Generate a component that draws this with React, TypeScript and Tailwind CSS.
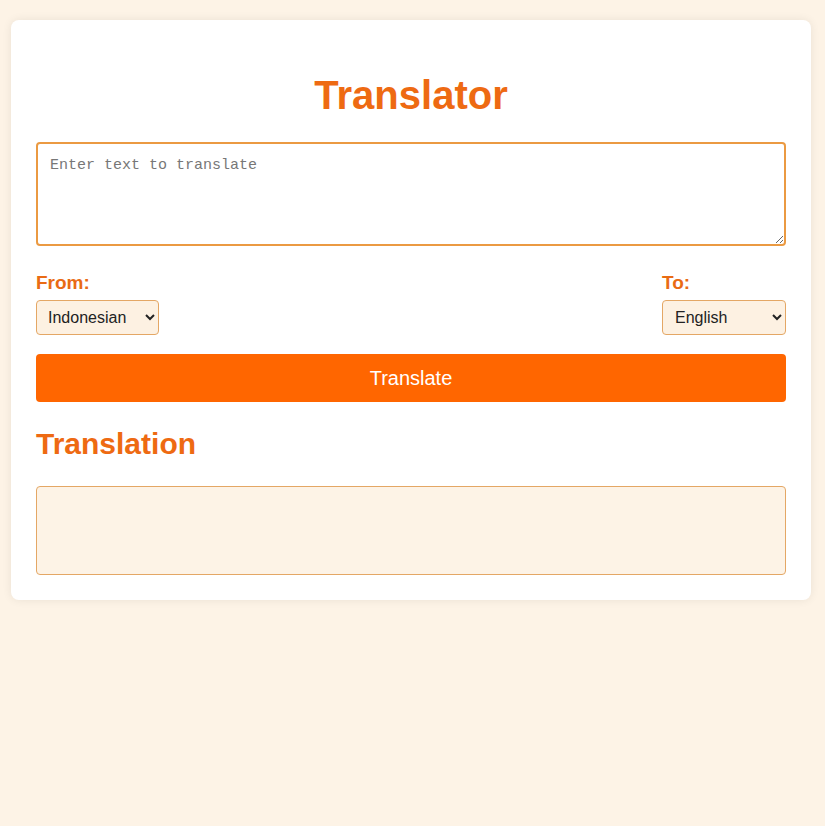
import React, { useState } from 'react'

const App = () => {
	const [text, setText] = useState('')
	const [from, setFrom] = useState('id')
	const [to, setTo] = useState('en')
	const [result, setResult] = useState('')

	return (
		<div className="min-h-[826px] bg-[#fdf3e6] pt-5 font-['Liberation_Sans',Arial,sans-serif]">
			<div className="ml-[11px] w-[800px] rounded-lg bg-white px-[25px] pb-[25px] pt-[25px] shadow-[0_0_10px_rgba(0,0,0,0.08)]">
				<h1 className="mb-[24px] mt-[27px] text-center text-[40px] font-bold leading-[46px] text-[#ee6a12]">Translator</h1>
				<textarea
					value={text}
					onChange={e => setText(e.target.value)}
					placeholder="Enter text to translate"
					className="block h-[104px] w-full rounded border-2 border-[#eb9a42] bg-white px-3 pb-[10px] pt-[13px] font-['Liberation_Mono',monospace] text-[15px] leading-[18px] text-[#333] placeholder:text-[#777] focus:outline-none"
				/>
				<div className="mt-[26px] flex justify-between">
					<div className="flex flex-col">
						<label className="mb-[6px] text-[19px] font-bold leading-[22px] text-[#e96b14]">From:</label>
						<select
							value={from}
							onChange={e => setFrom(e.target.value)}
							className="h-[35px] w-[123px] rounded border border-[#e4a765] bg-[#fdf1e2] pl-[7px] text-[16px] text-[#222]"
						>
							<option value="id">Indonesian</option>
							<option value="en">English</option>
						</select>
					</div>
					<div className="flex flex-col">
						<label className="mb-[6px] text-[19px] font-bold leading-[22px] text-[#e96b14]">To:</label>
						<select
							value={to}
							onChange={e => setTo(e.target.value)}
							className="h-[35px] w-[124px] rounded border border-[#e4a765] bg-[#fdf1e2] pl-[8px] text-[16px] text-[#222]"
						>
							<option value="en">English</option>
							<option value="id">Indonesian</option>
						</select>
					</div>
				</div>
				<button
					onClick={() => setResult(text)}
					className="mt-[19px] block h-[48px] w-full rounded bg-[#ff6600] text-[20px] text-white"
				>
					Translate
				</button>
				<h2 className="mt-[25px] text-[30px] font-bold leading-[34px] text-[#ee6a12]">Translation</h2>
				<div className="mt-[25px] h-[89px] rounded border border-[#e4a765] bg-[#fdf3e6] p-3 text-[16px] text-[#333]">{result}</div>
			</div>
		</div>
	)
}

export default App
